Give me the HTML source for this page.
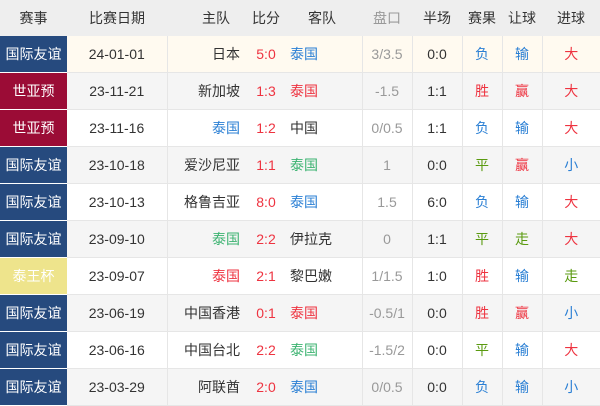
<!DOCTYPE html><html><head><meta charset="utf-8"><style>
body{margin:0;width:600px;height:400px;overflow:hidden;background:#fff;font-family:"Liberation Sans","Noto Sans CJK SC",sans-serif;font-size:14px;color:#333}
table{border-collapse:collapse;table-layout:fixed;width:600px}
td,th{padding:0;text-align:center;white-space:nowrap;overflow:hidden}
th{height:36px;background:#eee;font-weight:normal;color:#333}
td{height:36px;border-bottom:1px solid #e6e6e6}
td.b{border-left:1px solid #e6e6e6}
tr.g td{background:#f5f5f5}tr.c td{background:#fffaf0}
td.e{color:#fff;border-bottom:1px solid #fff}
.y{background:#264a7e!important}.w{background:#9b0c36!important}.k{background:#eee48c!important}
.h{text-align:right;padding-right:10px}.a{text-align:left;padding-left:8px}
.r{color:#ee3340}.bl{color:#2a7fd4}.gr{color:#3cb371}.ol{color:#5a9a10}.gy{color:#999}
</style></head><body><table>
<colgroup><col style="width:67px"><col style="width:100px"><col style="width:83px"><col style="width:32px"><col style="width:80px"><col style="width:50px"><col style="width:50px"><col style="width:40px"><col style="width:40px"><col style="width:58px"></colgroup>
<tr><th>赛事</th><th>比赛日期</th><th style="text-align:right;padding-right:20px">主队</th><th>比分</th><th>客队</th><th class="gy">盘口</th><th>半场</th><th>赛果</th><th>让球</th><th>进球</th></tr>
<tr class="c"><td class="e y">国际友谊</td><td>24-01-01</td><td class="b h">日本</td><td class="r">5:0</td><td class="a bl">泰国</td><td class="b gy">3/3.5</td><td class="b">0:0</td><td class="b bl">负</td><td class="b bl">输</td><td class="b r">大</td></tr>
<tr class="g"><td class="e w">世亚预</td><td>23-11-21</td><td class="b h">新加坡</td><td class="r">1:3</td><td class="a r">泰国</td><td class="b gy">-1.5</td><td class="b">1:1</td><td class="b r">胜</td><td class="b r">赢</td><td class="b r">大</td></tr>
<tr><td class="e w">世亚预</td><td>23-11-16</td><td class="b h bl">泰国</td><td class="r">1:2</td><td class="a">中国</td><td class="b gy">0/0.5</td><td class="b">1:1</td><td class="b bl">负</td><td class="b bl">输</td><td class="b r">大</td></tr>
<tr class="g"><td class="e y">国际友谊</td><td>23-10-18</td><td class="b h">爱沙尼亚</td><td class="r">1:1</td><td class="a gr">泰国</td><td class="b gy">1</td><td class="b">0:0</td><td class="b ol">平</td><td class="b r">赢</td><td class="b bl">小</td></tr>
<tr><td class="e y">国际友谊</td><td>23-10-13</td><td class="b h">格鲁吉亚</td><td class="r">8:0</td><td class="a bl">泰国</td><td class="b gy">1.5</td><td class="b">6:0</td><td class="b bl">负</td><td class="b bl">输</td><td class="b r">大</td></tr>
<tr class="g"><td class="e y">国际友谊</td><td>23-09-10</td><td class="b h gr">泰国</td><td class="r">2:2</td><td class="a">伊拉克</td><td class="b gy">0</td><td class="b">1:1</td><td class="b ol">平</td><td class="b ol">走</td><td class="b r">大</td></tr>
<tr><td class="e k">泰王杯</td><td>23-09-07</td><td class="b h r">泰国</td><td class="r">2:1</td><td class="a">黎巴嫩</td><td class="b gy">1/1.5</td><td class="b">1:0</td><td class="b r">胜</td><td class="b bl">输</td><td class="b ol">走</td></tr>
<tr class="g"><td class="e y">国际友谊</td><td>23-06-19</td><td class="b h">中国香港</td><td class="r">0:1</td><td class="a r">泰国</td><td class="b gy">-0.5/1</td><td class="b">0:0</td><td class="b r">胜</td><td class="b r">赢</td><td class="b bl">小</td></tr>
<tr><td class="e y">国际友谊</td><td>23-06-16</td><td class="b h">中国台北</td><td class="r">2:2</td><td class="a gr">泰国</td><td class="b gy">-1.5/2</td><td class="b">0:0</td><td class="b ol">平</td><td class="b bl">输</td><td class="b r">大</td></tr>
<tr class="g"><td class="e y">国际友谊</td><td>23-03-29</td><td class="b h">阿联酋</td><td class="r">2:0</td><td class="a bl">泰国</td><td class="b gy">0/0.5</td><td class="b">0:0</td><td class="b bl">负</td><td class="b bl">输</td><td class="b bl">小</td></tr>
</table></body></html>
